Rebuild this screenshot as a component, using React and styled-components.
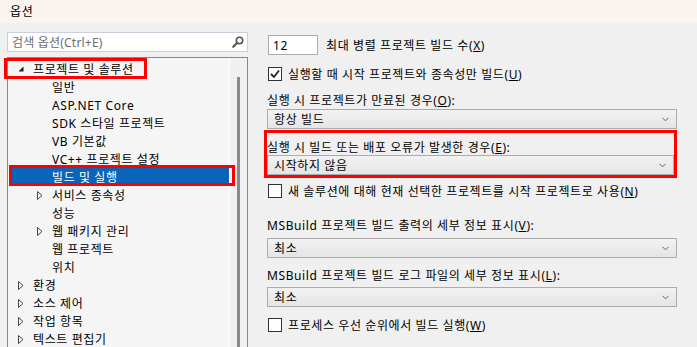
import React from 'react';
import styled, { createGlobalStyle } from 'styled-components';

const GlobalStyle = createGlobalStyle`
    html, body {
        margin: 0;
        padding: 0;
        overflow: hidden;
    }
    body {
        background: #f0f0f0;
        color: #000000;
        font-family: "Noto Sans", "Noto Sans CJK KR", sans-serif;
        font-size: 12px;
        letter-spacing: 0.6px;
    }
`;

const Window = styled.div`
    width: 697px;
    height: 347px;
    display: flex;
    flex-direction: column;
    overflow: hidden;
`;

const TitleBar = styled.div`
    flex: none;
    height: 23px;
    display: flex;
    align-items: center;
    padding: 0 0 2px 10px;
    box-sizing: border-box;
    background: #faf4f0;
`;

const Body = styled.div`
    display: flex;
    gap: 19px;
    padding: 9px 0 0 7px;
`;

const LeftPane = styled.div`
    width: 241px;
    flex: none;
    display: flex;
    flex-direction: column;
    gap: 5px;
`;

const Search = styled.div`
    box-sizing: border-box;
    height: 20px;
    display: flex;
    align-items: center;
    padding: 0 3px 0 4px;
    background: #ffffff;
    border: 1px solid #cccedb;
    color: #6d6d6d;
    letter-spacing: 0.2px;

    svg {
        margin-left: auto;
    }
`;

const Tree = styled.div`
    height: 300px;
    display: flex;
    background: #f5f5f5;
    border: 1px solid #828790;
`;

const TreeList = styled.div`
    flex: 1;
    padding: 2px 0 0 4px;
`;

const Row = styled.div`
    position: relative;
    height: 18px;
    display: flex;
    align-items: center;
    padding-left: ${p => 6 + p.$level * 19}px;
    background: ${p => (p.$selected ? '#0a64b8' : 'transparent')};
    color: ${p => (p.$selected ? '#ffffff' : '#000000')};
    white-space: nowrap;
`;

const Expander = styled.span`
    width: 15px;
    flex: none;
    display: flex;
    align-items: center;
`;

const Mark = styled.span`
    position: absolute;
    box-sizing: border-box;
    left: ${p => p.$x}px;
    top: ${p => p.$y}px;
    width: ${p => p.$w}px;
    height: ${p => p.$h}px;
    border: 3px solid #ff0000;
    pointer-events: none;
`;

const ScrollTrack = styled.div`
    width: 17px;
    flex: none;
    display: flex;
    justify-content: center;
    border-left: 1px solid #ffffff;
    background: #f0f0f0;
`;

const Thumb = styled.div`
    width: 3px;
    height: 280px;
    margin-top: 19px;
    background: #8a8a8a;
`;

const RightPane = styled.div`
    width: 410px;
    display: flex;
    flex-direction: column;
`;

const Line = styled.div`
    height: ${p => p.$h || 16}px;
    margin-top: ${p => p.$mt || 0}px;
    display: flex;
    align-items: center;
    gap: ${p => p.$gap || 0}px;
    white-space: nowrap;
`;

const TextBox = styled.div`
    box-sizing: border-box;
    width: 50px;
    height: 20px;
    margin-left: 1px;
    display: flex;
    align-items: center;
    padding-left: 4px;
    background: #ffffff;
    border: 1px solid #ababab;
`;

const Check = styled.span`
    box-sizing: border-box;
    width: 14px;
    height: 14px;
    margin-left: 1px;
    display: flex;
    align-items: center;
    justify-content: center;
    background: #ffffff;
    border: 1px solid #333333;
`;

const Combo = styled.div`
    box-sizing: border-box;
    height: 20px;
    margin-top: ${p => p.$mt || 0}px;
    display: flex;
    align-items: center;
    padding: 0 7px 0 6px;
    background: linear-gradient(#f2f2f2, #e5e5e5);
    border: 1px solid #acacac;

    svg {
        margin-left: auto;
    }
`;

const Highlight = styled.div`
    margin: 1px 0 0 -3px;
    padding-top: 6px;
    border: 3px solid #ff0000;
    display: flex;
    flex-direction: column;
`;

const SearchIcon = () => (
    <svg width="12" height="12" viewBox="0 0 12 12">
        <circle cx="7.5" cy="4.5" r="3.2" fill="none" stroke="#555555" strokeWidth="1.6" />
        <line x1="5.2" y1="6.8" x2="1.3" y2="10.7" stroke="#555555" strokeWidth="2.2" strokeLinecap="round" />
    </svg>
);

const OpenArrow = () => (
    <svg width="6" height="6" viewBox="0 0 6 6">
        <polygon points="5.5,0.5 5.5,5.5 0.5,5.5" fill="#1e1e1e" />
    </svg>
);

const ClosedArrow = () => (
    <svg width="6" height="9" viewBox="0 0 6 9">
        <polygon points="0.5,0.5 5,4.5 0.5,8.5" fill="none" stroke="#444444" strokeWidth="1" />
    </svg>
);

const Chevron = () => (
    <svg width="7" height="5" viewBox="0 0 7 5">
        <polyline points="0.5,0.8 3.5,3.8 6.5,0.8" fill="none" stroke="#606060" strokeWidth="1" />
    </svg>
);

const CheckMark = () => (
    <svg width="10" height="10" viewBox="0 0 10 10">
        <polyline points="1,5 4,8 9,1.5" fill="none" stroke="#222222" strokeWidth="1.8" />
    </svg>
);

const tree = [
    { label: '프로젝트 및 솔루션', level: 0, exp: 'open', mark: { x: -8, y: -2, w: 143, h: 21 } },
    { label: '일반', level: 1 },
    { label: 'ASP.NET Core', level: 1 },
    { label: 'SDK 스타일 프로젝트', level: 1 },
    { label: 'VB 기본값', level: 1 },
    { label: 'VC++ 프로젝트 설정', level: 1 },
    { label: '빌드 및 실행', level: 1, selected: true, mark: { x: -3, y: -3, w: 226, h: 21 } },
    { label: '서비스 종속성', level: 1, exp: 'closed' },
    { label: '성능', level: 1 },
    { label: '웹 패키지 관리', level: 1, exp: 'closed' },
    { label: '웹 프로젝트', level: 1 },
    { label: '위치', level: 1 },
    { label: '환경', level: 0, exp: 'closed' },
    { label: '소스 제어', level: 0, exp: 'closed' },
    { label: '작업 항목', level: 0, exp: 'closed' },
    { label: '텍스트 편집기', level: 0, exp: 'closed' },
];

const App = () => (
    <Window>
        <GlobalStyle />
        <TitleBar>옵션</TitleBar>
        <Body>
            <LeftPane>
                <Search>
                    검색 옵션(Ctrl+E)
                    <SearchIcon />
                </Search>
                <Tree>
                    <TreeList>
                        {tree.map(item => (
                            <Row key={item.label} $level={item.level} $selected={item.selected}>
                                <Expander>
                                    {item.exp === 'open' && <OpenArrow />}
                                    {item.exp === 'closed' && <ClosedArrow />}
                                </Expander>
                                <span>{item.label}</span>
                                {item.mark && (
                                    <Mark $x={item.mark.x} $y={item.mark.y} $w={item.mark.w} $h={item.mark.h} />
                                )}
                            </Row>
                        ))}
                    </TreeList>
                    <ScrollTrack>
                        <Thumb />
                    </ScrollTrack>
                </Tree>
            </LeftPane>
            <RightPane>
                <Line $h={20} $mt={3} $gap={8}>
                    <TextBox>12</TextBox>
                    <span>최대 병렬 프로젝트 빌드 수(<u>X</u>)</span>
                </Line>
                <Line $mt={11} $gap={6}>
                    <Check><CheckMark /></Check>
                    <span>실행할 때 시작 프로젝트와 종속성만 빌드(<u>U</u>)</span>
                </Line>
                <Line $mt={10}><span>실행 시 프로젝트가 만료된 경우(<u>O</u>):</span></Line>
                <Combo $mt={1}>항상 빌드<Chevron /></Combo>
                <Highlight>
                    <Line><span>실행 시 빌드 또는 배포 오류가 발생한 경우(<u>E</u>):</span></Line>
                    <Combo>시작하지 않음<Chevron /></Combo>
                </Highlight>
                <Line $mt={5} $gap={6}>
                    <Check />
                    <span>새 솔루션에 대해 현재 선택한 프로젝트를 시작 프로젝트로 사용(<u>N</u>)</span>
                </Line>
                <Line $mt={18}><span>MSBuild 프로젝트 빌드 출력의 세부 정보 표시(<u>V</u>):</span></Line>
                <Combo $mt={5}>최소<Chevron /></Combo>
                <Line $mt={9}><span>MSBuild 프로젝트 빌드 로그 파일의 세부 정보 표시(<u>L</u>):</span></Line>
                <Combo $mt={4}>최소<Chevron /></Combo>
                <Line $mt={10} $gap={6}>
                    <Check />
                    <span>프로세스 우선 순위에서 빌드 실행(<u>W</u>)</span>
                </Line>
            </RightPane>
        </Body>
    </Window>
);

export default App;
